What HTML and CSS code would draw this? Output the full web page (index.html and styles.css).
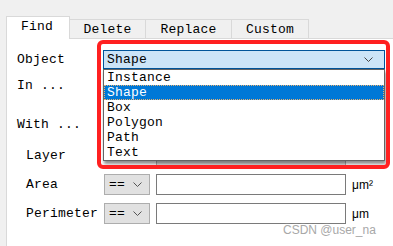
FILE: index.html
```html
<!DOCTYPE html>
<html lang="en">
<head>
  <meta charset="UTF-8" />
  <meta name="viewport" content="width=device-width, initial-scale=1" />
  <title>Find</title>
  <link rel="stylesheet" href="styles.css">
</head>
<body>
  <div class="window">
    <div class="tabs">
      <div class="tab tab-find active">Find</div>
      <div class="tab tab-delete">Delete</div>
      <div class="tab tab-replace">Replace</div>
      <div class="tab tab-custom">Custom</div>
    </div>

    <div class="panel">
      <div class="row">
        <span class="label">Object</span>
        <div class="combo combo-open">
          <span>Shape</span>
          <svg class="chev" width="9" height="5" viewBox="0 0 9 5"><path d="M0.5 0.5 L4.5 4.5 L8.5 0.5" fill="none" stroke="#444" /></svg>
        </div>
      </div>

      <div class="row">
        <span class="label">In ...</span>
        <div class="combo"></div>
      </div>

      <div class="row row-with">
        <span class="label">With ...</span>
      </div>

      <div class="row row-field">
        <span class="label sub">Layer</span>
        <div class="combo combo-gray layer">
          <svg class="chev" width="9" height="5" viewBox="0 0 9 5"><path d="M0.5 0.5 L4.5 4.5 L8.5 0.5" fill="none" stroke="#444" /></svg>
        </div>
      </div>

      <div class="row row-field gap-area">
        <span class="label sub">Area</span>
        <div class="combo combo-gray op">
          <span>==</span>
          <svg class="chev" width="9" height="5" viewBox="0 0 9 5"><path d="M0.5 0.5 L4.5 4.5 L8.5 0.5" fill="none" stroke="#555" /></svg>
        </div>
        <div class="input"></div>
        <span class="unit">μm²</span>
      </div>

      <div class="row row-field gap-perim">
        <span class="label sub">Perimeter</span>
        <div class="combo combo-gray op">
          <span>==</span>
          <svg class="chev" width="9" height="5" viewBox="0 0 9 5"><path d="M0.5 0.5 L4.5 4.5 L8.5 0.5" fill="none" stroke="#555" /></svg>
        </div>
        <div class="input"></div>
        <span class="unit">μm</span>
      </div>
    </div>

    <!-- open dropdown of the Object combo -->
    <ul class="droplist">
      <li>Instance</li>
      <li class="selected">Shape</li>
      <li>Box</li>
      <li>Polygon</li>
      <li>Path</li>
      <li>Text</li>
    </ul>

    <!-- red annotation frame -->
    <div class="mark"></div>

    <div class="watermark">CSDN @user_na</div>
  </div>
</body>
</html>
```

FILE: styles.css
```css
* {
  margin: 0;
  padding: 0;
  box-sizing: border-box;
}

body {
  background-color: #f0f0f0;
  font-family: 'Liberation Mono', 'Courier New', monospace;
  font-size: 13px;
  letter-spacing: 0.2px;
  color: #000;
  overflow: hidden;
}

.window {
  position: relative;
  width: 393px;
  height: 246px;
}

/* Tabs */
.tabs {
  display: flex;
  align-items: flex-end;
  height: 38px;
  padding-left: 6px;
}

.tab {
  height: 19px;
  line-height: 20px;
  text-align: center;
  border: 1px solid #d9d9d9;
  border-bottom: none;
  margin-left: -1px;
  background-color: #f0f0f0;
}

.tab-find { width: 64px; margin-left: 0; }
.tab-delete { width: 77px; }
.tab-replace { width: 87px; }
.tab-custom { width: 78px; }

.tab.active {
  position: relative;
  z-index: 1;
  height: 23px;
  line-height: 19px;
  margin-bottom: -1px;
  padding-right: 2px;
  background-color: #fff;
}

/* Panel */
.panel {
  margin-left: 6px;
  height: 208px;
  background-color: #fff;
  border-top: 1px solid #d9d9d9;
  border-left: 1px solid #d9d9d9;
  padding: 11px 0 0 10px;
}

.row {
  display: flex;
  align-items: center;
  height: 19px;
  line-height: 20px;
  margin-bottom: 7px;
}

.row-with {
  margin-top: 20px;
  margin-bottom: 11px;
}

.row-field {
  height: 21px;
  margin-bottom: 8px;
}

.gap-perim {
  margin-top: 1px;
}

.label {
  width: 86px;
  flex-shrink: 0;
}

.label.sub {
  padding-left: 9px;
}

.combo {
  display: flex;
  align-items: center;
  justify-content: space-between;
  height: 100%;
  width: 282px;
  padding: 0 11px 0 3px;
  border: 1px solid #7a7a7a;
  background-color: #fff;
}

.combo-open {
  background-color: #cce4f7;
  border-color: #005499;
}

.combo-gray {
  background-color: #e1e1e1;
  border-color: #adadad;
}

.combo.op {
  width: 46px;
  margin-left: 1px;
  padding: 0 7px 0 4px;
}

.combo.layer {
  width: 190px;
  margin-left: 53px;
  justify-content: flex-end;
}

.input {
  width: 190px;
  height: 100%;
  margin-left: 6px;
  border: 1px solid #7a7a7a;
  background-color: #fff;
}

.unit {
  margin-left: 6px;
  font-family: 'Liberation Sans', Arial, sans-serif;
  font-size: 12px;
  letter-spacing: 0;
}

/* Dropdown list */
.droplist {
  position: absolute;
  left: 103px;
  top: 69px;
  width: 282px;
  height: 92px;
  list-style: none;
  background-color: #fff;
  border: 1px solid #646464;
  box-shadow: 1px 3px 3px rgba(0, 0, 0, 0.45);
  z-index: 2;
}

.droplist li {
  height: 15px;
  line-height: 16px;
  padding-left: 3px;
}

.droplist li.selected {
  background-color: #0078d7;
  color: #fff;
  outline: 1px dotted #e8b070;
  outline-offset: -1px;
}

/* Annotation */
.mark {
  position: absolute;
  left: 97px;
  top: 40px;
  width: 293px;
  height: 129px;
  border: 4px solid #ff2020;
  border-radius: 6px;
  z-index: 3;
}

.watermark {
  position: absolute;
  left: 283px;
  top: 223px;
  font-family: 'Liberation Sans', Arial, sans-serif;
  font-size: 12px;
  letter-spacing: 0;
  color: #a8a8a8;
  text-shadow: 0 0 2px #fff, 0 0 2px #fff;
  z-index: 4;
}
```
